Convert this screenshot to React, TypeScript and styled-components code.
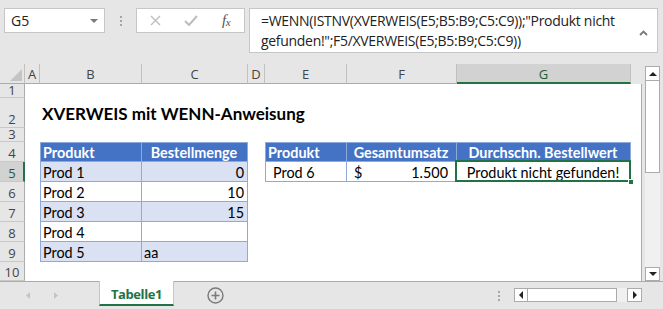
import React from 'react';
import styled, { createGlobalStyle } from 'styled-components';

const GREEN = '#217346';
const BLUE = '#4472c4';
const BAND = '#d9e1f2';
const TLINE = '#8eaadb';
const APP_BG = '#e6e6e6';
const UI_FONT = `"Open Sans", "Noto Sans", sans-serif`;
const CELL_FONT = `Lato, "Open Sans", sans-serif`;

const COLS = [25, 15, 102, 106, 17, 82, 110, 174, 11];
const ROWS = [20, 14, 30, 14, 20, 20, 20, 20, 20, 20, 19];
const LETTERS = ['A', 'B', 'C', 'D', 'E', 'F', 'G'];

const GlobalStyle = createGlobalStyle`
  html, body { margin: 0; padding: 0; background: ${APP_BG}; }
  body { width: 663px; height: 310px; overflow: hidden; font-family: ${UI_FONT}; }
  * { box-sizing: border-box; }
`;

const Window = styled.div`
  width: 663px;
  height: 310px;
  display: flex;
  flex-direction: column;
  background: ${APP_BG};
`;

/* ---------- formula bar ---------- */
const FormulaArea = styled.div`
  height: 64px;
  flex: none;
  display: flex;
  align-items: flex-start;
  padding: 8px 0 0 4px;
`;

const NameBox = styled.div`
  width: 101px;
  height: 25px;
  background: #fff;
  border: 1px solid #c6c6c6;
  display: flex;
  align-items: center;
  justify-content: space-between;
  padding: 0 6px 0 6px;
  font-size: 14px;
  color: #222;
`;

const Grip = styled.div`
  width: 31px;
  height: 25px;
  display: flex;
  flex-direction: column;
  align-items: center;
  justify-content: center;
  gap: 2px;
  & > span { width: 2px; height: 2px; background: #a6a6a6; }
`;

const FuncBox = styled.div`
  width: 109px;
  height: 25px;
  background: #fff;
  border: 1px solid #c6c6c6;
  display: flex;
  align-items: center;
  padding-left: 13px;
`;

const FuncIcon = styled.div<{ $w: number }>`
  width: ${(p) => p.$w}px;
  display: flex;
  align-items: center;
`;

const Fx = styled.span`
  font-family: "Liberation Serif", serif;
  font-style: italic;
  font-size: 15px;
  color: #555;
  letter-spacing: -0.5px;
  & > sub { font-size: 11px; vertical-align: -1px; }
`;

const FormulaBox = styled.div`
  margin-left: 4px;
  width: 409px;
  height: 45px;
  background: #fff;
  border: 1px solid #c6c6c6;
  display: flex;
  padding: 2px 0 0 11px;
`;

const FormulaText = styled.div`
  flex: 1;
  font-size: 14px;
  line-height: 20px;
  color: #222;
  white-space: nowrap;
  letter-spacing: -0.3px;
`;

const FormulaLine = styled.div``;

const Caret = styled.div`
  width: 18px;
  padding-top: 8px;
`;

/* ---------- sheet ---------- */
const Main = styled.div`
  height: 217px;
  flex: none;
  display: flex;
`;

const Sheet = styled.div`
  width: 642px;
  height: 217px;
  display: grid;
  grid-template-columns: ${COLS.map((c) => c + 'px').join(' ')};
  grid-template-rows: ${ROWS.map((r) => r + 'px').join(' ')};
  background: #fff;
`;

const Corner = styled.div`
  grid-column: 1;
  grid-row: 1;
  background: ${APP_BG};
  border-right: 1px solid #c0c0c0;
  border-bottom: 1px solid #ababab;
  position: relative;
  & > svg { position: absolute; right: 2px; bottom: 2px; }
`;

const ColHead = styled.div<{ $col: number; $sel?: boolean }>`
  grid-column: ${(p) => p.$col};
  grid-row: 1;
  background: ${(p) => (p.$sel ? '#d2d2d2' : APP_BG)};
  border-right: 1px solid #c0c0c0;
  border-bottom: ${(p) => (p.$sel ? `2px solid ${GREEN}` : '1px solid #ababab')};
  display: flex;
  align-items: center;
  justify-content: center;
  font-size: 13px;
  color: ${(p) => (p.$sel ? '#1e5c38' : '#444')};
  padding-top: ${(p) => (p.$sel ? 1 : 0)}px;
`;

const HeadFiller = styled.div`
  grid-column: 9;
  grid-row: 1;
  background: ${APP_BG};
`;

const RowHead = styled.div<{ $row: number; $sel?: boolean; $short?: boolean }>`
  grid-column: 1;
  grid-row: ${(p) => p.$row};
  background: ${(p) => (p.$sel ? '#d2d2d2' : APP_BG)};
  border-right: ${(p) => (p.$sel ? `2px solid ${GREEN}` : '1px solid #ababab')};
  border-bottom: 1px solid #c8c8c8;
  display: flex;
  align-items: flex-end;
  justify-content: center;
  overflow: hidden;
  font-size: 13px;
  line-height: ${(p) => (p.$short ? 13 : 16)}px;
  color: ${(p) => (p.$sel ? '#1e5c38' : '#444')};
  padding-left: ${(p) => (p.$sel ? 1 : 0)}px;
`;

const PaneEdge = styled.div`
  grid-column: 9;
  grid-row: 2 / -1;
  border-right: 1px solid #ababab;
`;

const Title = styled.div`
  grid-column: 3;
  grid-row: 3;
  display: flex;
  align-items: flex-end;
  padding: 0 0 4px 2px;
  white-space: nowrap;
  font-family: ${CELL_FONT};
  font-weight: 700;
  font-size: 17px;
  color: #000;
`;

const DataTable = styled.div<{ $col: string; $row: string; $cols: string; $rows: number }>`
  grid-column: ${(p) => p.$col};
  grid-row: ${(p) => p.$row};
  display: grid;
  grid-template-columns: ${(p) => p.$cols};
  grid-template-rows: 19px repeat(${(p) => p.$rows - 1}, 20px);
  border-top: 1px solid ${TLINE};
  border-left: 1px solid ${TLINE};
`;

type Kind = 'head' | 'band' | 'plain';

const TCell = styled.div<{ $kind: Kind; $align?: string; $pl?: number; $pr?: number }>`
  position: relative;
  border-right: 1px solid ${TLINE};
  border-bottom: 1px solid ${TLINE};
  background: ${(p) => (p.$kind === 'head' ? BLUE : p.$kind === 'band' ? BAND : '#fff')};
  color: ${(p) => (p.$kind === 'head' ? '#fff' : '#000')};
  font-weight: ${(p) => (p.$kind === 'head' ? 700 : 400)};
  font-family: ${CELL_FONT};
  font-size: 14.4px;
  display: flex;
  align-items: center;
  justify-content: ${(p) => p.$align || 'flex-start'};
  padding: 1px ${(p) => p.$pr ?? 3}px 0 ${(p) => p.$pl ?? 2}px;
  white-space: nowrap;
`;

const Selection = styled.div`
  position: absolute;
  top: -2px;
  left: -2px;
  right: -1px;
  bottom: -1px;
  border: 2px solid ${GREEN};
  pointer-events: none;
`;

const FillHandle = styled.div`
  position: absolute;
  right: -4px;
  bottom: -4px;
  width: 6px;
  height: 6px;
  background: ${GREEN};
  border: 1px solid #fff;
`;

/* ---------- vertical scrollbar ---------- */
const VScroll = styled.div`
  width: 15px;
  margin: 2px 0 0 3px;
  display: flex;
  flex-direction: column;
  background: #f0f0f0;
`;

const ScrollBtn = styled.div<{ $h: number }>`
  height: ${(p) => p.$h}px;
  width: 100%;
  flex: none;
  background: #fff;
  border: 1px solid #ababab;
  display: flex;
  align-items: center;
  justify-content: center;
`;

const VThumb = styled.div`
  height: 92px;
  flex: none;
  background: #fff;
  border: 1px solid #ababab;
  border-top: none;
`;

const Track = styled.div`
  flex: 1;
`;

/* ---------- tab bar ---------- */
const TabBar = styled.div`
  height: 29px;
  flex: none;
  display: flex;
  border-top: 1px solid #ababab;
  border-bottom: 1px solid #d4d4d4;
`;

const NavArea = styled.div`
  width: 99px;
  display: flex;
  align-items: center;
  padding-left: 26px;
  gap: 24px;
`;

const SheetTab = styled.div`
  width: 75px;
  margin-top: -1px;
  height: 25px;
  background: #fff;
  border-left: 1px solid #c6c6c6;
  border-right: 1px solid #c6c6c6;
  border-bottom: 2px solid ${GREEN};
  display: flex;
  align-items: center;
  justify-content: center;
  font-weight: 700;
  font-size: 13px;
  letter-spacing: -0.4px;
  color: ${GREEN};
  padding-top: 2px;
`;

const AddBtn = styled.div`
  margin-left: 33px;
  display: flex;
  align-items: center;
`;

const Spacer = styled.div`
  flex: 1;
`;

const HDots = styled.div`
  width: 17px;
  display: flex;
  flex-direction: column;
  justify-content: center;
  align-items: flex-start;
  padding-left: 1px;
  gap: 2px;
  & > span { width: 2px; height: 2px; background: #a6a6a6; }
`;

const HScroll = styled.div`
  width: 128px;
  height: 14px;
  margin: 6px 21px 0 0;
  display: flex;
  background: #f0f0f0;
`;

const HBtn = styled.div<{ $w: number }>`
  width: ${(p) => p.$w}px;
  height: 100%;
  flex: none;
  background: #fff;
  border: 1px solid #ababab;
  display: flex;
  align-items: center;
  justify-content: center;
`;

const HThumb = styled.div`
  width: 89px;
  flex: none;
  background: #fff;
  border: 1px solid #ababab;
  border-left: none;
`;

/* ---------- data ---------- */
const table1: { kind: Kind; cells: [string, string]; align2: string }[] = [
  { kind: 'head', cells: ['Produkt', 'Bestellmenge'], align2: 'center' },
  { kind: 'band', cells: ['Prod 1', '0'], align2: 'flex-end' },
  { kind: 'plain', cells: ['Prod 2', '10'], align2: 'flex-end' },
  { kind: 'band', cells: ['Prod 3', '15'], align2: 'flex-end' },
  { kind: 'plain', cells: ['Prod 4', ''], align2: 'flex-end' },
  { kind: 'band', cells: ['Prod 5', 'aa'], align2: 'flex-start' },
];

const Tri = ({ dir, color, w = 7, h = 4 }: { dir: 'up' | 'down' | 'left' | 'right'; color: string; w?: number; h?: number }) => {
  const pts =
    dir === 'up'
      ? `0,${h} ${w},${h} ${w / 2},0`
      : dir === 'down'
      ? `0,0 ${w},0 ${w / 2},${h}`
      : dir === 'left'
      ? `${w},0 ${w},${h} 0,${h / 2}`
      : `0,0 0,${h} ${w},${h / 2}`;
  return (
    <svg width={w} height={h} viewBox={`0 0 ${w} ${h}`}>
      <polygon points={pts} fill={color} />
    </svg>
  );
};

export default function App() {
  return (
    <Window>
      <GlobalStyle />
      <FormulaArea>
        <NameBox>
          <span>G5</span>
          <Tri dir="down" color="#7a7a7a" w={8} h={4} />
        </NameBox>
        <Grip>
          <span />
          <span />
          <span />
        </Grip>
        <FuncBox>
          <FuncIcon $w={34}>
            <svg width="11" height="11" viewBox="0 0 11 11">
              <path d="M1 1 L10 10 M10 1 L1 10" stroke="#bdbdbd" strokeWidth="1.4" />
            </svg>
          </FuncIcon>
          <FuncIcon $w={38}>
            <svg width="14" height="11" viewBox="0 0 14 11">
              <path d="M1 6 L5 10 L13 1" stroke="#bdbdbd" strokeWidth="2" fill="none" />
            </svg>
          </FuncIcon>
          <FuncIcon $w={16}>
            <Fx>
              f<sub>x</sub>
            </Fx>
          </FuncIcon>
        </FuncBox>
        <FormulaBox>
          <FormulaText>
            <FormulaLine>=WENN(ISTNV(XVERWEIS(E5;B5:B9;C5:C9));"Produkt nicht</FormulaLine>
            <FormulaLine>gefunden!";F5/XVERWEIS(E5;B5:B9;C5:C9))</FormulaLine>
          </FormulaText>
          <Caret>
            <svg width="9" height="6" viewBox="0 0 9 6">
              <path d="M1 5 L4.5 1.5 L8 5" stroke="#7a7a7a" strokeWidth="1.8" fill="none" />
            </svg>
          </Caret>
        </FormulaBox>
      </FormulaArea>

      <Main>
        <Sheet>
          <Corner>
            <svg width="12" height="12" viewBox="0 0 12 12">
              <polygon points="0,12 12,12 12,0" fill="#c4c4c4" />
            </svg>
          </Corner>
          {LETTERS.map((l, i) => (
            <ColHead key={l} $col={i + 2} $sel={l === 'G'}>
              {l}
            </ColHead>
          ))}
          <HeadFiller />
          {Array.from({ length: 10 }, (_, i) => (
            <RowHead key={i} $row={i + 2} $sel={i + 1 === 5} $short={ROWS[i + 1] < 16}>
              {i + 1}
            </RowHead>
          ))}
          <PaneEdge />
          <Title>XVERWEIS mit WENN-Anweisung</Title>

          <DataTable $col="3 / 5" $row="5 / 11" $cols="101px 106px" $rows={6}>
            {table1.map((r, i) => (
              <React.Fragment key={i}>
                <TCell $kind={r.kind}>{r.cells[0]}</TCell>
                <TCell $kind={r.kind} $align={r.align2}>
                  {r.cells[1]}
                </TCell>
              </React.Fragment>
            ))}
          </DataTable>

          <DataTable $col="6 / 9" $row="5 / 7" $cols="81px 110px 174px" $rows={2}>
            <TCell $kind="head">Produkt</TCell>
            <TCell $kind="head" $align="center">
              Gesamtumsatz
            </TCell>
            <TCell $kind="head" $align="center">
              Durchschn. Bestellwert
            </TCell>
            <TCell $kind="plain" $pl={7}>
              Prod 6
            </TCell>
            <TCell $kind="plain" $align="space-between" $pl={7} $pr={8}>
              <span>$</span>
              <span>1.500</span>
            </TCell>
            <TCell $kind="plain" $align="center">
              Produkt nicht gefunden!
              <Selection />
              <FillHandle />
            </TCell>
          </DataTable>
        </Sheet>
        <VScroll>
          <ScrollBtn $h={15}>
            <Tri dir="up" color="#222" w={8} h={4} />
          </ScrollBtn>
          <VThumb />
          <Track />
          <ScrollBtn $h={14}>
            <Tri dir="down" color="#222" w={8} h={4} />
          </ScrollBtn>
        </VScroll>
      </Main>

      <TabBar>
        <NavArea>
          <Tri dir="left" color="#c4c4c4" w={4} h={7} />
          <Tri dir="right" color="#c4c4c4" w={4} h={7} />
        </NavArea>
        <SheetTab>Tabelle1</SheetTab>
        <AddBtn>
          <svg width="17" height="17" viewBox="0 0 17 17">
            <circle cx="8.5" cy="8.5" r="7.5" fill="none" stroke="#7a7a7a" strokeWidth="1.4" />
            <path d="M8.5 4.5 V12.5 M4.5 8.5 H12.5" stroke="#7a7a7a" strokeWidth="1.6" />
          </svg>
        </AddBtn>
        <Spacer />
        <HDots>
          <span />
          <span />
          <span />
        </HDots>
        <HScroll>
          <HBtn $w={14}>
            <Tri dir="left" color="#222" w={4} h={8} />
          </HBtn>
          <HThumb />
          <Track />
          <HBtn $w={15}>
            <Tri dir="right" color="#222" w={4} h={8} />
          </HBtn>
        </HScroll>
      </TabBar>
    </Window>
  );
}
